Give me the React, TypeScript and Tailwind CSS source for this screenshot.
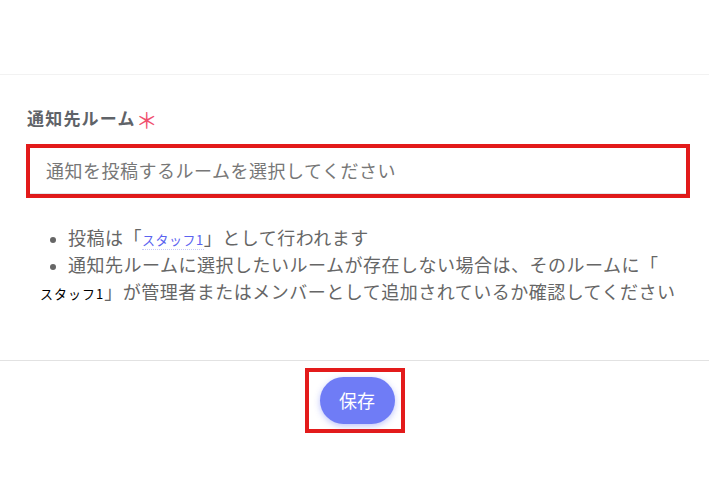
function Bullet() {
  return (
    <span className="inline-flex w-[28px] justify-center pr-[2px] align-middle">
      <span className="h-[6px] w-[6px] rounded-full bg-[#666]" />
    </span>
  );
}

export default function App() {
  return (
    <div
      className="w-[709px] h-[502px] bg-white overflow-hidden"
      style={{ fontFamily: '"Noto Sans CJK JP", "Noto Sans", sans-serif' }}
    >
      <div className="h-[74px]" />
      <div className="border-t border-[#f2f2f2]" />

      <div className="pt-[33px]">
        <p className="ml-[27px] flex items-center text-[17px] leading-[20px] tracking-[1.2px] font-bold text-[#5f6368]">
          通知先ルーム
          <span className="text-[22px] leading-[20px] font-normal text-[#f0506e]">＊</span>
        </p>

        <div className="mt-[16px] ml-[26px] w-[664px] border-4 border-[#e31b1b]">
          <div className="h-[46px] flex items-center pl-[16px] border-b border-[#e3e6ea] shadow-[0_1px_2px_rgba(0,0,0,0.06)] text-[18px] tracking-[0.5px] text-[#777]">
            通知を投稿するルームを選択してください
          </div>
        </div>

        <ul className="mt-[26px] pl-[40px] text-[18px] leading-[27px] tracking-[0.5px] text-[#666]">
          <li>
            <Bullet />
            投稿は「<span className="text-[13px] tracking-[0.5px] text-[#5b63f0] border-b border-dotted border-[#c8cbf6] leading-[16px]">スタッフ1</span>」として行われます
          </li>
          <li className="whitespace-nowrap">
            <Bullet />
            通知先ルームに選択したいルームが存在しない場合は、そのルームに「
            <br />
            <span className="text-[13px] tracking-[1px] text-black">スタッフ1</span>」が管理者またはメンバーとして追加されているか確認してください
          </li>
        </ul>
      </div>

      <div className="mt-[53px] border-t border-[#e2e2e2]" />

      <div className="flex justify-center pt-[7px]">
        <div className="w-[100px] h-[65px] border-4 border-[#e31b1b] flex items-center pl-[11px]">
          <button className="w-[75px] h-[47px] rounded-full bg-[#6f7cf6] text-white text-[18px] shadow-[0_2px_6px_rgba(111,124,246,0.45)]">
            保存
          </button>
        </div>
      </div>
    </div>
  );
}
